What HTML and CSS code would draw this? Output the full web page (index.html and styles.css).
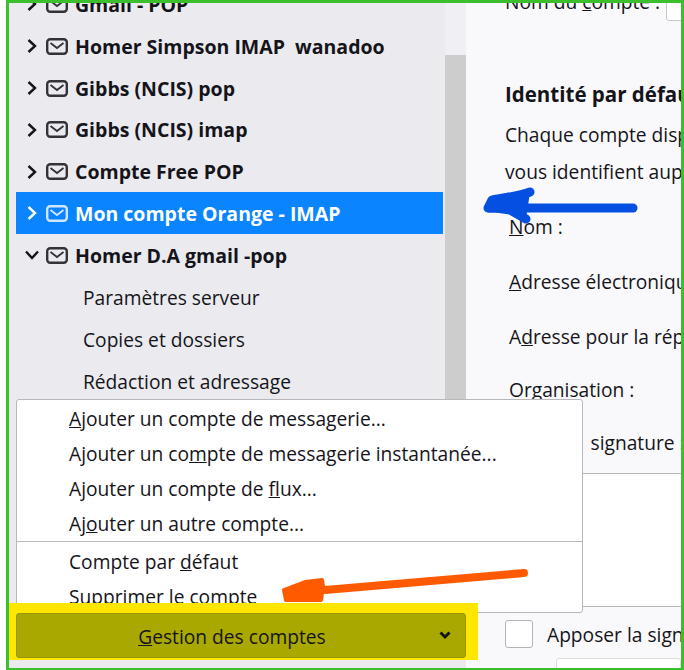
FILE: index.html
```html
<!DOCTYPE html>
<html lang="fr">
<head>
    <meta charset="UTF-8">
    <title>Paramètres des comptes</title>
    <link rel="stylesheet" href="styles.css">
</head>
<body>
    <svg width="0" height="0" class="defs">
        <symbol id="mail" viewBox="0 0 22 17">
            <rect x="1.2" y="1.2" width="19.6" height="14.6" rx="3" fill="none" stroke="currentColor" stroke-width="2.4"/>
            <path d="M4.5 5 L11 10 L17.5 5" fill="none" stroke="currentColor" stroke-width="1.8"/>
        </symbol>
        <symbol id="chev-right" viewBox="0 0 10 14">
            <path d="M1.5 1 L8 7 L1.5 13" fill="none" stroke="currentColor" stroke-width="2.4"/>
        </symbol>
        <symbol id="chev-down" viewBox="0 0 14 10">
            <path d="M1 1.5 L7 8 L13 1.5" fill="none" stroke="currentColor" stroke-width="2.4"/>
        </symbol>
        <symbol id="chev-small" viewBox="0 0 12 9">
            <path d="M1.5 1.5 L6 6 L10.5 1.5" fill="none" stroke="currentColor" stroke-width="3"/>
        </symbol>
    </svg>

    <div class="frame">
        <div class="sidebar">
            <div class="sidebar-top">
                <div class="tree">
                    <div class="tree-row"><svg class="chev"><use href="#chev-right"/></svg><svg class="mail"><use href="#mail"/></svg>Gmail - POP</div>
                    <div class="tree-row"><svg class="chev"><use href="#chev-right"/></svg><svg class="mail"><use href="#mail"/></svg>Homer Simpson IMAP  wanadoo</div>
                    <div class="tree-row"><svg class="chev"><use href="#chev-right"/></svg><svg class="mail"><use href="#mail"/></svg>Gibbs (NCIS) pop</div>
                    <div class="tree-row"><svg class="chev"><use href="#chev-right"/></svg><svg class="mail"><use href="#mail"/></svg>Gibbs (NCIS) imap</div>
                    <div class="tree-row"><svg class="chev"><use href="#chev-right"/></svg><svg class="mail"><use href="#mail"/></svg>Compte Free POP</div>
                    <div class="tree-row selected"><svg class="chev"><use href="#chev-right"/></svg><svg class="mail"><use href="#mail"/></svg>Mon compte Orange - IMAP</div>
                    <div class="tree-row"><svg class="chev-open"><use href="#chev-down"/></svg><svg class="mail"><use href="#mail"/></svg>Homer D.A gmail -pop</div>
                    <div class="tree-sub">Paramètres serveur</div>
                    <div class="tree-sub">Copies et dossiers</div>
                    <div class="tree-sub">Rédaction et adressage</div>
                </div>
                <div class="scrollbar"><div class="scroll-thumb"></div></div>
            </div>
            <div class="foot">
                <button class="manage-btn">
                    <span class="manage-label"><u>G</u>estion des comptes</span>
                    <svg class="manage-chev"><use href="#chev-small"/></svg>
                </button>
            </div>
        </div>

        <div class="pane">
            <div class="field-top">
                <span>Nom du <u>c</u>ompte :</span>
                <span class="input-stub"></span>
            </div>
            <h2 class="pane-title">Identité par défaut</h2>
            <p class="pane-line">Chaque compte dispose d'une identité, les informations qui</p>
            <p class="pane-line">vous identifient auprès des autres personnes</p>
            <div class="pane-field"><u>N</u>om :</div>
            <div class="pane-field"><u>A</u>dresse électronique :</div>
            <div class="pane-field short">A<u>d</u>resse pour la réponse :</div>
            <div class="pane-field short">Organisation :</div>
            <div class="pane-sig"><span class="sig-prefix">Texte de </span>signature :</div>
            <div class="sig-box"></div>
            <div class="sig-check">
                <span class="checkbox"></span>
                <span class="sig-check-label">Apposer la signature depuis un fichier</span>
            </div>
            <div class="file-stub"></div>
        </div>

        <div class="menu">
            <div class="menu-item"><u>A</u>jouter un compte de messagerie...</div>
            <div class="menu-item">Ajouter un co<u>m</u>pte de messagerie instantanée...</div>
            <div class="menu-item">Ajouter un compte de <u>f</u>lux...</div>
            <div class="menu-item">Aj<u>o</u>uter un autre compte...</div>
            <div class="menu-sep"></div>
            <div class="menu-item">Compte par <u>d</u>éfaut</div>
            <div class="menu-item"><u>S</u>upprimer le compte</div>
        </div>
    </div>

    <!-- arrows drawn on top of the screenshot -->
    <svg class="arrow-blue" width="170" height="44" viewBox="0 0 170 44">
        <path d="M9 23 L153 23" stroke="#0550e0" stroke-width="9" stroke-linecap="round" fill="none"/>
        <path d="M50 7 C38 12 24 12 12 15 L8 23 L16 23 L30 25 L46 34" stroke="#0550e0" stroke-width="9" stroke-linecap="round" stroke-linejoin="round" fill="#0550e0"/>
    </svg>
    <svg class="arrow-orange" width="250" height="36" viewBox="0 0 250 36">
        <path d="M244 4 L45 21" stroke="#ff5a00" stroke-width="8" stroke-linecap="round" fill="none"/>
        <path d="M4 21 L25 13 L42 11 L43 17 L41 31 L6 31 Z" stroke="#ff5a00" stroke-width="4" stroke-linejoin="round" fill="#ff5a00"/>
    </svg>
</body>
</html>
```

FILE: styles.css
```css
/* Account settings window */
html, body {
    margin: 0;
    padding: 0;
    background-color: #ffffff;
}

body {
    position: relative;
    width: 684px;
    height: 670px;
    overflow: hidden;
    font-family: "Open Sans", "Noto Sans", sans-serif;
    font-size: 19.2px;
    color: #15141a;
}

.defs {
    position: absolute;
}

.frame {
    position: relative;
    display: flex;
    box-sizing: border-box;
    width: 678px;
    height: 670px;
    margin-left: 6px;
    border: 3px solid #3cbf2c;
    border-bottom-width: 2px;
    overflow: hidden;
}

/* Left column */
.sidebar {
    display: flex;
    flex-direction: column;
    flex: none;
    width: 457px;
    background-color: #ebebef;
}

.sidebar-top {
    display: flex;
    height: 600px;
    overflow: hidden;
}

.tree {
    flex: none;
    box-sizing: border-box;
    width: 434px;
    margin-top: -20px;
    padding-left: 7px;
}

.tree-row {
    display: flex;
    align-items: center;
    box-sizing: border-box;
    height: 41.8px;
    padding-top: 1.2px;
    font-size: 19.5px;
    font-weight: 700;
    white-space: pre;
}

.tree-row.selected {
    background-color: #0a84ff;
    color: #ffffff;
}

.chev {
    flex: none;
    width: 10px;
    height: 14px;
    margin-left: 11px;
    margin-right: 9px;
    color: #15141a;
}

.chev-open {
    flex: none;
    width: 14px;
    height: 10px;
    margin-left: 9px;
    margin-right: 7px;
}

.selected .chev {
    color: #ffffff;
}

.mail {
    flex: none;
    width: 22px;
    height: 17px;
    margin-right: 7px;
    color: #333337;
}

.selected .mail {
    color: #cfe6ff;
}

.tree-sub {
    display: flex;
    align-items: center;
    box-sizing: border-box;
    height: 41.8px;
    padding-top: 2px;
    padding-left: 67px;
    white-space: nowrap;
}

.scrollbar {
    flex: none;
    width: 21px;
    margin-left: 2px;
    padding-top: 52px;
    background-color: #f0f0f4;
}

.scroll-thumb {
    height: 560px;
    background-color: #cdcdcd;
}

.foot {
    position: relative;
    z-index: 3;
    flex: none;
    box-sizing: border-box;
    width: 469px;
    height: 57px;
    padding: 10px 12px 2px 7px;
    background-color: #ffe600;
}

.manage-btn {
    display: flex;
    align-items: center;
    width: 100%;
    height: 45px;
    padding: 2px 0 0;
    background-color: #a8a800;
    border: 1px solid #969600;
    border-radius: 3px;
    font-family: inherit;
    font-size: 19.2px;
    color: #15141a;
}

.manage-label {
    flex: 1;
    padding-left: 8px;
    text-align: center;
}

.manage-chev {
    flex: none;
    width: 12px;
    height: 9px;
    margin-right: 14px;
    margin-bottom: 3px;
}

/* Right column */
.pane {
    flex: 1;
    min-width: 0;
    background-color: #f9f9fb;
    white-space: nowrap;
    overflow: hidden;
}

.field-top {
    display: flex;
    align-items: flex-start;
    height: 53px;
    margin-top: -14px;
    padding-left: 39px;
    line-height: 26px;
}

.input-stub {
    flex: none;
    width: 60px;
    height: 30px;
    margin-left: 6px;
    background-color: #ffffff;
    border: 1px solid #c8c8cc;
    border-radius: 3px;
}

.pane-title {
    margin: 38px 0 0 39px;
    font-size: 20.5px;
    line-height: 28px;
}

.pane-line {
    margin: 0 0 0 39px;
    line-height: 37px;
}

.pane-title + .pane-line {
    margin-top: 8px;
}

.pane-field {
    margin-left: 43px;
    height: 55px;
    line-height: 26px;
}

.pane-field.short {
    height: 53px;
}

.pane-line + .pane-field {
    margin-top: 24px;
}

.pane-sig {
    height: 43px;
    margin-left: 38px;
    line-height: 26px;
}

.sig-prefix {
    word-spacing: 2.5px;
}

.sig-box {
    height: 132px;
    background-color: #ffffff;
    border-top: 1px solid #b8b8bc;
    border-bottom: 1px solid #b8b8bc;
}

.sig-check {
    display: flex;
    align-items: center;
    gap: 14px;
    margin: 12px 0 0 39px;
}

.sig-check-label {
    padding-top: 2px;
}

.checkbox {
    flex: none;
    box-sizing: border-box;
    width: 28px;
    height: 28px;
    background-color: #ffffff;
    border: 1px solid #b4b4b8;
    border-radius: 3px;
}

.file-stub {
    height: 20px;
    margin: 10px 0 0 90px;
    background-color: #ffffff;
    border: 1px solid #dcdce0;
    border-radius: 3px;
}

/* Popup menu */
.menu {
    position: absolute;
    z-index: 2;
    left: 7px;
    top: 396px;
    box-sizing: border-box;
    width: 567px;
    height: 214px;
    padding-top: 1px;
    background-color: #ffffff;
    border: 1px solid #b8b8bc;
    border-radius: 3px;
}

.menu-item {
    height: 35px;
    padding-left: 52px;
    line-height: 35px;
    white-space: nowrap;
}

.menu-sep {
    height: 1px;
    margin: 0 0 2px;
    background-color: #b8b8bc;
}

/* Arrows on top */
.arrow-blue {
    position: absolute;
    left: 480px;
    top: 185px;
}

.arrow-orange {
    position: absolute;
    z-index: 4;
    left: 280px;
    top: 569px;
}
```
